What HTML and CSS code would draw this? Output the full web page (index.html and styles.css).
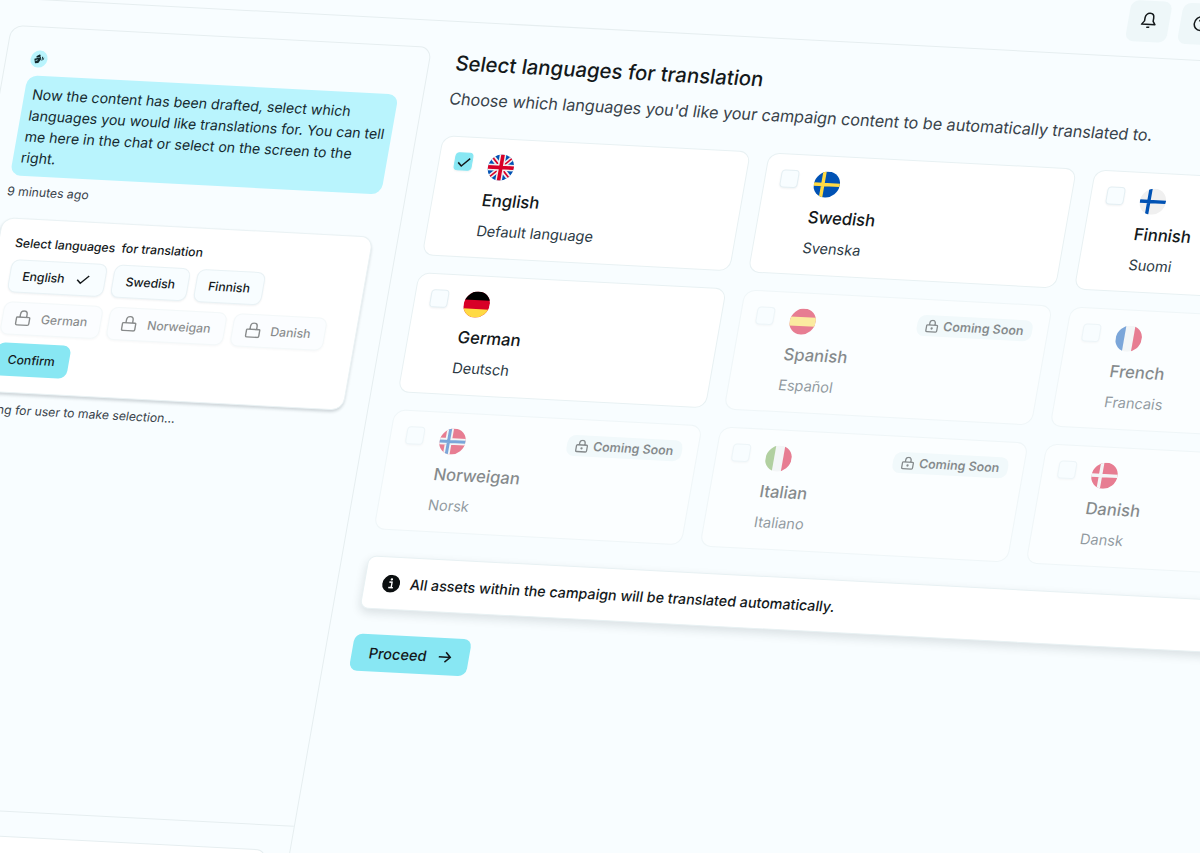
FILE: index.html
```html
<!DOCTYPE html>
<html lang="en">
<head>
    <meta charset="UTF-8">
    <meta name="viewport" content="width=device-width, initial-scale=1.0">
    <title>Select languages for translation</title>
    <link rel="stylesheet" href="styles.css">
</head>
<body>
    <!-- Shared icons and flags -->
    <svg class="sprite" width="0" height="0">
        <symbol id="check" viewBox="0 0 16 16"><path d="M2 8.600l3.900 3.600L14 4" fill="none" stroke="currentColor" stroke-width="1.600"/></symbol>
        <symbol id="lock" viewBox="0 0 16 16"><path d="M2.200 7.200h11.600a.8.8 0 0 1 .8.8v5.600a1.400 1.400 0 0 1-1.400 1.400H2.800a1.400 1.400 0 0 1-1.400-1.400V8a.8.8 0 0 1 .8-.8zM4.700 7V4.200a3.300 3.300 0 0 1 6.600 0V7" fill="none" stroke="currentColor" stroke-width="1.400"/></symbol>
        <symbol id="lock-dot" viewBox="0 0 16 16"><path d="M2.800 6.500h10.400a1 1 0 0 1 1 1V13a1.200 1.200 0 0 1-1.200 1.200H3A1.200 1.200 0 0 1 1.800 13V7.500a1 1 0 0 1 1-1zM4.900 6.300V4.300a3.100 3.100 0 0 1 6.200 0v2" fill="none" stroke="currentColor" stroke-width="1.500"/><circle cx="8" cy="10.400" r="1.300" fill="currentColor"/></symbol>
        <symbol id="flag-en" viewBox="0 0 26 26">
            <rect width="26" height="26" fill="#0052b4"/>
            <path d="M0 0l26 26M26 0L0 26" stroke="#f0f0f0" stroke-width="5"/>
            <path d="M0 0l26 26M26 0L0 26" stroke="#d80027" stroke-width="1.600"/>
            <path d="M13 0v26M0 13h26" stroke="#f0f0f0" stroke-width="6.600"/>
            <path d="M13 0v26M0 13h26" stroke="#d80027" stroke-width="3.600"/>
        </symbol>
        <symbol id="flag-sv" viewBox="0 0 26 26"><rect width="26" height="26" fill="#0052b4"/><path d="M9 0v26M0 13h26" stroke="#ffda44" stroke-width="3.400"/></symbol>
        <symbol id="flag-fi" viewBox="0 0 26 26"><rect width="26" height="26" fill="#f0f0f0"/><path d="M9 0v26M0 13h26" stroke="#0052b4" stroke-width="3.400"/></symbol>
        <symbol id="flag-de" viewBox="0 0 26 26"><rect width="26" height="26" fill="#d80027"/><rect width="26" height="8.600" fill="#000"/><rect y="17.400" width="26" height="8.600" fill="#ffda44"/></symbol>
        <symbol id="flag-es" viewBox="0 0 26 26"><rect width="26" height="26" fill="#d80027"/><rect y="8.500" width="26" height="9" fill="#ffda44"/></symbol>
        <symbol id="flag-fr" viewBox="0 0 26 26"><rect width="26" height="26" fill="#f0f0f0"/><rect width="8.500" height="26" fill="#0052b4"/><rect x="17.500" width="8.500" height="26" fill="#d80027"/></symbol>
        <symbol id="flag-no" viewBox="0 0 26 26"><rect width="26" height="26" fill="#d80027"/><path d="M9 0v26M0 13h26" stroke="#f0f0f0" stroke-width="6.600"/><path d="M9 0v26M0 13h26" stroke="#0052b4" stroke-width="3"/></symbol>
        <symbol id="flag-it" viewBox="0 0 26 26"><rect width="26" height="26" fill="#f0f0f0"/><rect width="8.500" height="26" fill="#6da544"/><rect x="17.500" width="8.500" height="26" fill="#d80027"/></symbol>
        <symbol id="flag-da" viewBox="0 0 26 26"><rect width="26" height="26" fill="#d80027"/><path d="M9 0v26M0 13h26" stroke="#f0f0f0" stroke-width="3.400"/></symbol>
    </svg>

    <div class="stage">
        <header class="topbar">
            <button class="icon-button">
                <svg width="17" height="18" viewBox="0 0 17 18" fill="none" stroke="currentColor" stroke-width="1.500"><path d="M8.500 1.500c-2.600 0-4.300 1.900-4.300 4.500v3.200L1.800 12.600h13.400l-2.400-3.400V6c0-2.600-1.700-4.500-4.300-4.500z" stroke-linejoin="round"/><path d="M7 15.400h3"/></svg>
            </button>
            <button class="icon-button">
                <svg width="18" height="18" viewBox="0 0 18 18" fill="none" stroke="currentColor" stroke-width="1.500"><circle cx="9" cy="9" r="7"/><path d="M6.800 7a2.200 2.200 0 1 1 2.200 2.600V11M9 12.400v1.300"/></svg>
            </button>
        </header>

        <main class="layout">
            <aside class="chat">
                <div class="chat-body">
                    <div class="avatar">
                        <svg width="11" height="11" viewBox="0 0 11 11" fill="#12292e"><path d="M2.400 2.700L5.200.9l1.400.5-.7 1.900-3 .9z"/><path d="M.8 5.300l5-1.300 1-1.600.6 3.300-2 3.700-3.200.5z"/><path d="M8.200 3.300l.9-.5v3.700l-.9.800zM9.700 4l.7-.3v2l-.7.6z"/><path d="M2.300 7.200l2-.9" stroke="#b9f4fd" stroke-width=".8"/></svg>
                    </div>
                    <p class="bubble">Now the content has been drafted, select which<br>languages you would like translations for. You can tell<br>me here in the chat or select on the screen to the<br>right.</p>
                    <p class="meta">9 minutes ago</p>

                    <div class="picker">
                        <h3 class="picker-title">Select languages&nbsp; for translation</h3>
                        <div class="chips">
                            <button class="chip">English<svg class="chip-check" width="15" height="15"><use href="#check"/></svg></button>
                            <button class="chip">Swedish</button>
                            <button class="chip">Finnish</button>
                            <button class="chip locked"><svg width="16" height="16"><use href="#lock"/></svg>German</button>
                            <button class="chip locked"><svg width="16" height="16"><use href="#lock"/></svg>Norweigan</button>
                            <button class="chip locked"><svg width="16" height="16"><use href="#lock"/></svg>Danish</button>
                            <button class="chip confirm">Confirm</button>
                        </div>
                    </div>
                    <p class="meta waiting">Waiting for user to make selection...</p>
                </div>
                <div class="chat-footer">
                    <div class="chat-input"></div>
                </div>
            </aside>

            <section class="content">
                <h1 class="title">Select languages for translation</h1>
                <p class="subtitle">Choose which languages you'd like your campaign content to be automatically translated to.</p>

                <div class="grid">
                    <div class="card">
                        <span class="checkbox checked"><svg width="15" height="15"><use href="#check"/></svg></span>
                        <div class="language">
                            <svg class="flag"><use href="#flag-en"/></svg>
                            <h2 class="name">English</h2>
                            <p class="native">Default language</p>
                        </div>
                    </div>
                    <div class="card">
                        <span class="checkbox"></span>
                        <div class="language">
                            <svg class="flag"><use href="#flag-sv"/></svg>
                            <h2 class="name">Swedish</h2>
                            <p class="native">Svenska</p>
                        </div>
                    </div>
                    <div class="card">
                        <span class="checkbox"></span>
                        <div class="language">
                            <svg class="flag"><use href="#flag-fi"/></svg>
                            <h2 class="name">Finnish</h2>
                            <p class="native">Suomi</p>
                        </div>
                    </div>
                    <div class="card">
                        <span class="checkbox"></span>
                        <div class="language">
                            <svg class="flag"><use href="#flag-de"/></svg>
                            <h2 class="name">German</h2>
                            <p class="native">Deutsch</p>
                        </div>
                    </div>
                    <div class="card disabled">
                        <span class="checkbox"></span>
                        <div class="language">
                            <svg class="flag"><use href="#flag-es"/></svg>
                            <h2 class="name">Spanish</h2>
                            <p class="native">Español</p>
                        </div>
                        <span class="badge"><svg width="14" height="14"><use href="#lock-dot"/></svg>Coming Soon</span>
                    </div>
                    <div class="card disabled">
                        <span class="checkbox"></span>
                        <div class="language">
                            <svg class="flag"><use href="#flag-fr"/></svg>
                            <h2 class="name">French</h2>
                            <p class="native">Francais</p>
                        </div>
                    </div>
                    <div class="card disabled">
                        <span class="checkbox"></span>
                        <div class="language">
                            <svg class="flag"><use href="#flag-no"/></svg>
                            <h2 class="name">Norweigan</h2>
                            <p class="native">Norsk</p>
                        </div>
                        <span class="badge"><svg width="14" height="14"><use href="#lock-dot"/></svg>Coming Soon</span>
                    </div>
                    <div class="card disabled">
                        <span class="checkbox"></span>
                        <div class="language">
                            <svg class="flag"><use href="#flag-it"/></svg>
                            <h2 class="name">Italian</h2>
                            <p class="native">Italiano</p>
                        </div>
                        <span class="badge"><svg width="14" height="14"><use href="#lock-dot"/></svg>Coming Soon</span>
                    </div>
                    <div class="card disabled">
                        <span class="checkbox"></span>
                        <div class="language">
                            <svg class="flag"><use href="#flag-da"/></svg>
                            <h2 class="name">Danish</h2>
                            <p class="native">Dansk</p>
                        </div>
                    </div>
                </div>

                <div class="notice">
                    <svg width="18" height="18" viewBox="0 0 18 18"><circle cx="9" cy="9" r="8.800" fill="#0b0f10"/><path d="M7 7.500h2.700v5M6.800 12.900h4.600" fill="none" stroke="#fff" stroke-width="1.400"/><circle cx="9" cy="4.700" r="1.200" fill="#fff"/></svg>
                    <span>All assets within the campaign will be translated automatically.</span>
                </div>

                <button class="proceed">
                    <span>Proceed</span>
                    <svg width="14" height="14" viewBox="0 0 14 14" fill="none" stroke="currentColor" stroke-width="1.500"><path d="M1 7h11.500M7.500 2l5 5-5 5"/></svg>
                </button>
            </section>
        </main>
    </div>
</body>
</html>
```
FILE: styles.css
```css
body {
    margin: 0;
    height: 100vh;
    overflow: hidden;
    background: #f8fdff;
    color: #14191b;
    font-family: Inter, "Liberation Sans", sans-serif;
}

h1, h2, h3, p {
    margin: 0;
}

button {
    font: inherit;
    color: inherit;
    border: none;
}

.sprite {
    display: none;
}

/* Tilted app window */
.stage {
    width: 1440px;
    transform-origin: 0 0;
    transform: matrix(1, 0.0524, -0.1763, 1, 12.9, -76);
}

/* Top bar */
.topbar {
    display: flex;
    gap: 11px;
    box-sizing: border-box;
    height: 74px;
    padding: 16.5px 0 0 1122px;
    border-bottom: 1px solid #e6eef0;
}

.icon-button {
    display: flex;
    align-items: center;
    justify-content: center;
    width: 41px;
    height: 41px;
    padding: 0;
    border-radius: 8px;
    background: #eef7f9;
}

.layout {
    display: flex;
    align-items: flex-start;
    gap: 26px;
    padding: 26px 0 0 16px;
}

/* Chat panel */
.chat {
    box-sizing: border-box;
    flex: none;
    width: 421px;
    border: 1px solid #e6eef0;
    border-radius: 12px;
}

.chat-body {
    box-sizing: border-box;
    height: 778px;
    padding: 23px 24px 0;
}

.avatar {
    display: flex;
    align-items: center;
    justify-content: center;
    width: 17px;
    height: 17px;
    margin-bottom: 8px;
    border-radius: 50%;
    background: #b9f4fd;
}

.bubble {
    padding: 8px;
    border-radius: 10px;
    background: #b9f4fd;
    font-size: 14.1px;
    line-height: 21px;
    white-space: nowrap;
    color: #14292f;
}

.meta {
    margin-top: 7px;
    font-size: 12.2px;
    line-height: 18px;
    color: #39434b;
}

.picker {
    margin-top: 17px;
    padding: 15px 16px 16px;
    border: 1px solid #eaf2f4;
    border-radius: 12px;
    background: #fff;
    box-shadow: 0 2px 3px rgba(20, 40, 50, 0.18);
}

.picker-title {
    font-size: 12.2px;
    font-weight: 500;
    line-height: 18px;
}

.chips {
    display: flex;
    flex-wrap: wrap;
    gap: 8.5px 7px;
    margin-top: 7px;
}

.chip {
    display: flex;
    align-items: center;
    gap: 9px;
    box-sizing: border-box;
    height: 33px;
    padding: 0 12px;
    border: 1px solid #e9f2f5;
    border-radius: 8px;
    background: #f8fdff;
    box-shadow: 0 1px 2px rgba(20, 40, 50, 0.06);
    font-size: 12.2px;
    font-weight: 500;
}

.chip-check {
    margin: 0 2px;
}

.locked {
    gap: 10px;
    padding-right: 13px;
    opacity: 0.5;
}

.confirm {
    border: none;
    padding: 0 14px 0 13px;
    background: #88e7f3;
    box-shadow: none;
}

.waiting {
    margin-top: 8px;
}

.chat-footer {
    padding: 24px;
    border-top: 1px solid #e6eef0;
}

.chat-input {
    height: 60px;
    border: 1px solid #e6eef0;
    border-radius: 8px;
    background: #fff;
}

/* Language selection */
.content {
    flex: none;
    width: 960px;
}

.title {
    padding-top: 1px;
    font-size: 20.35px;
    font-weight: 500;
    line-height: 28px;
}

.subtitle {
    margin-top: 9px;
    font-size: 16.15px;
    line-height: 24px;
    color: #39434b;
}

.grid {
    display: grid;
    grid-template-columns: repeat(3, 307.5px);
    grid-auto-rows: 120px;
    gap: 17px 18.5px;
    margin-top: 25px;
}

.card {
    display: flex;
    align-items: flex-start;
    box-sizing: border-box;
    padding: 15px;
    border: 1px solid #e8f1f3;
    border-radius: 11px;
    background: #fff;
}

.disabled {
    opacity: 0.5;
}

.checkbox {
    display: flex;
    align-items: center;
    justify-content: center;
    box-sizing: border-box;
    width: 18px;
    height: 18px;
    margin-right: 16px;
    border: 1px solid #e4eff3;
    border-radius: 4px;
    background: #f8fdff;
    box-shadow: 0 1px 2px rgba(20, 40, 50, 0.06);
}

.checked {
    border-color: #88e7f3;
    background: #88e7f3;
}

.checked svg {
    flex: none;
}

.flag {
    display: block;
    width: 26px;
    height: 26px;
    border-radius: 50%;
}

.name {
    margin-top: 9px;
    font-size: 16.6px;
    font-weight: 500;
    line-height: 22px;
}

.native {
    margin-top: 10px;
    font-size: 14.5px;
    line-height: 20px;
    color: #2c3a45;
}

.badge {
    display: flex;
    align-items: center;
    gap: 4px;
    height: 21px;
    margin-left: auto;
    padding: 0 8px;
    border-radius: 8px;
    background: #ecf7f9;
    font-size: 12.4px;
    font-weight: 600;
}

.notice {
    display: flex;
    align-items: center;
    gap: 10px;
    box-sizing: border-box;
    height: 53px;
    margin-top: 26px;
    padding: 0 17px;
    border: 1px solid #e8f1f3;
    border-radius: 8px;
    background: #fff;
    box-shadow: 0 4px 10px rgba(20, 40, 50, 0.13);
    font-size: 14.25px;
    font-weight: 500;
}

.proceed {
    display: flex;
    align-items: center;
    gap: 11px;
    height: 37px;
    margin-top: 25px;
    padding: 0 17px;
    border-radius: 8px;
    background: #88e7f3;
    font-size: 14.5px;
    font-weight: 500;
}
```
